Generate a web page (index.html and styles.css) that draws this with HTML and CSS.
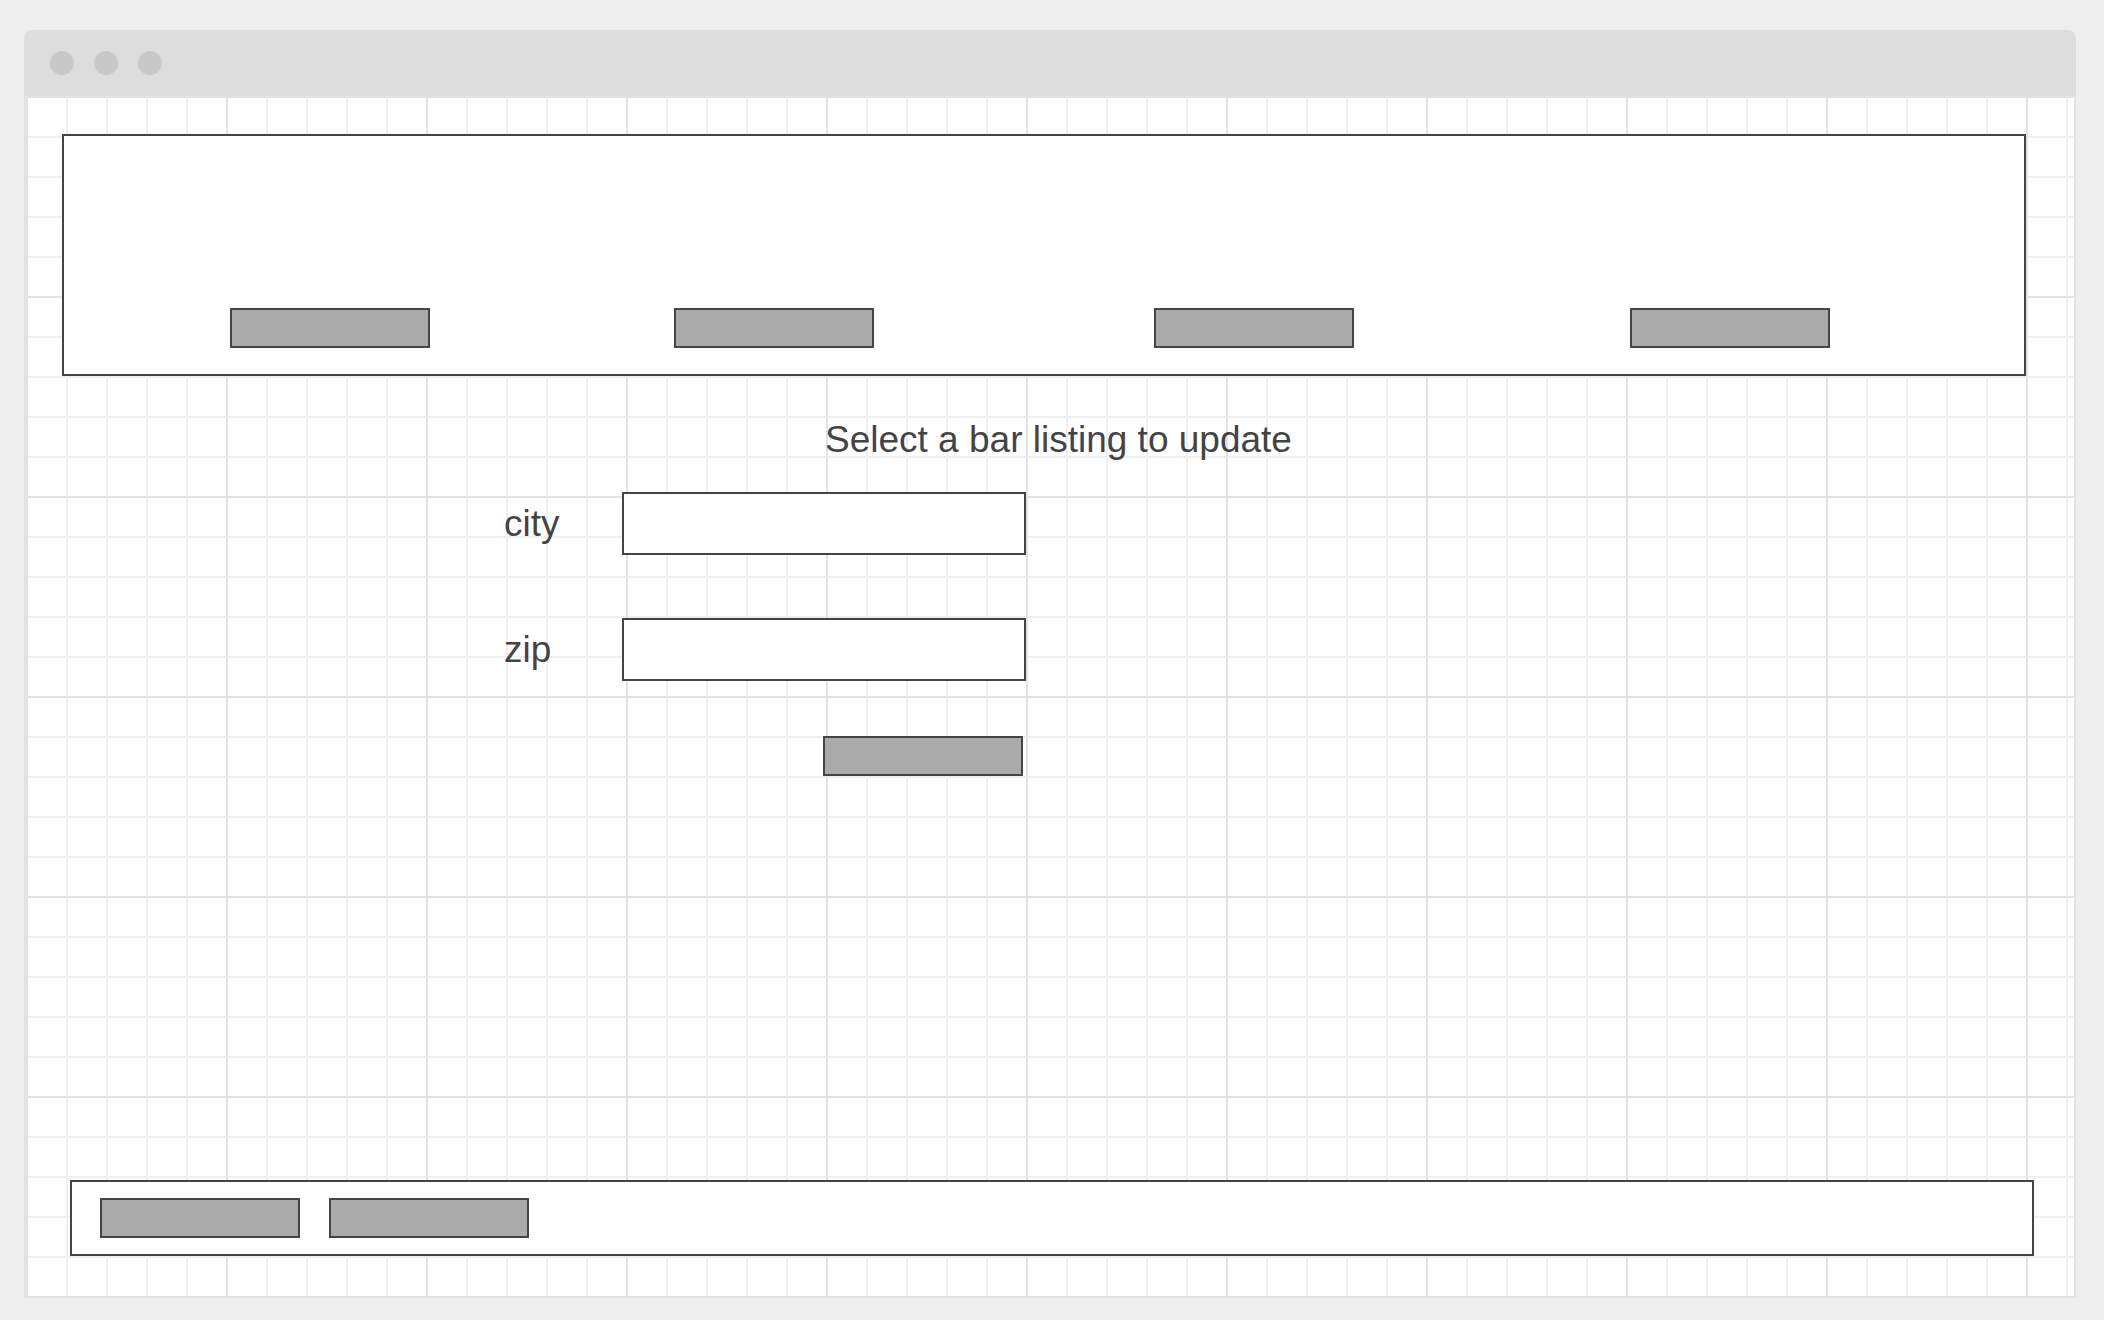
FILE: index.html
```html
<!DOCTYPE html>
<html lang="en">
<head>
    <meta charset="UTF-8">
    <meta name="viewport" content="width=device-width, initial-scale=1.0">
    <title>Update Bar Listing</title>
    <link rel="stylesheet" href="styles.css">
</head>
<body>

    <div class="window">
        <div class="title-bar">
            <span class="dot"></span>
            <span class="dot"></span>
            <span class="dot"></span>
        </div>

        <div class="canvas">
            <header class="nav-box">
                <span class="block-btn"></span>
                <span class="block-btn"></span>
                <span class="block-btn"></span>
                <span class="block-btn"></span>
            </header>

            <main class="update-form">
                <h1 class="form-title">Select a bar listing to update</h1>

                <div class="field-row">
                    <label for="city">city</label>
                    <input id="city" type="text">
                </div>

                <div class="field-row">
                    <label for="zip">zip</label>
                    <input id="zip" type="text">
                </div>

                <button class="block-btn submit-btn" type="button"></button>
            </main>

            <footer class="footer-box">
                <span class="block-btn"></span>
                <span class="block-btn"></span>
            </footer>
        </div>
    </div>

</body>
</html>
```

FILE: styles.css
```css
:root {
    --page-bg: #eeeeee;
    --chrome: #dddddd;
    --dot: #c8c8c8;
    --ink: #444444;
    --block-fill: #aaaaaa;
    --grid-minor: #efefef;
    --grid-major: #e3e3e3;
    --font-body: 'Liberation Sans', Arial, sans-serif;
}

body {
    margin: 0;
    padding: 30px 28px 22px 24px;
    background: var(--page-bg);
    font-family: var(--font-body);
    color: var(--ink);
}

/* --- Window chrome --- */
.window {
    border-radius: 8px 8px 0 0;
    overflow: hidden;
}

.title-bar {
    height: 66px;
    background: var(--chrome);
    display: flex;
    align-items: center;
    gap: 20px;
    padding-left: 26px;
}

.dot {
    width: 24px;
    height: 24px;
    border-radius: 50%;
    background: var(--dot);
}

/* --- Graph paper canvas --- */
.canvas {
    height: 1200px;
    border: 2px solid #e2e2e2;
    border-top: none;
    display: flex;
    flex-direction: column;
    background-color: #fff;
    background-image:
        linear-gradient(to right, var(--grid-major) 2px, transparent 2px),
        linear-gradient(to bottom, var(--grid-major) 2px, transparent 2px),
        linear-gradient(to right, var(--grid-minor) 2px, transparent 2px),
        linear-gradient(to bottom, var(--grid-minor) 2px, transparent 2px);
    background-size: 200px 100%, 100% 200px, 40px 100%, 100% 40px;
}

/* --- Shared grey block (button placeholder) --- */
.block-btn {
    display: block;
    width: 200px;
    height: 40px;
    box-sizing: border-box;
    border: 2px solid var(--ink);
    background: var(--block-fill);
    padding: 0;
    margin: 0;
}

/* --- Header --- */
.nav-box {
    margin: 38px 48px 0 36px;
    height: 242px;
    box-sizing: border-box;
    border: 2px solid var(--ink);
    background: #fff;
    display: flex;
    align-items: flex-end;
    padding: 0 0 26px 166px;
}

.nav-box .block-btn:nth-child(2) { margin-left: 244px; }
.nav-box .block-btn:nth-child(3) { margin-left: 280px; }
.nav-box .block-btn:nth-child(4) { margin-left: 276px; }

/* --- Form --- */
.update-form {
    margin-left: 478px;
    display: flex;
    flex-direction: column;
    align-items: flex-start;
}

.form-title {
    margin: 43px 0 0 321px;
    font-size: 37px;
    line-height: 41px;
    font-weight: normal;
}

.field-row {
    display: flex;
    align-items: center;
    margin-top: 32px;
}

.field-row + .field-row {
    margin-top: 63px;
}

.field-row label {
    width: 118px;
    font-size: 37px;
    line-height: 41px;
}

.field-row input {
    width: 404px;
    height: 63px;
    box-sizing: border-box;
    border: 2px solid var(--ink);
    background: #fff;
    margin: 0;
    outline: none;
}

.submit-btn {
    margin: 55px 0 0 319px;
}

/* --- Footer --- */
.footer-box {
    margin: auto 40px 40px 44px;
    height: 76px;
    box-sizing: border-box;
    border: 2px solid var(--ink);
    background: #fff;
    display: flex;
    align-items: center;
    gap: 29px;
    padding-left: 28px;
}
```
